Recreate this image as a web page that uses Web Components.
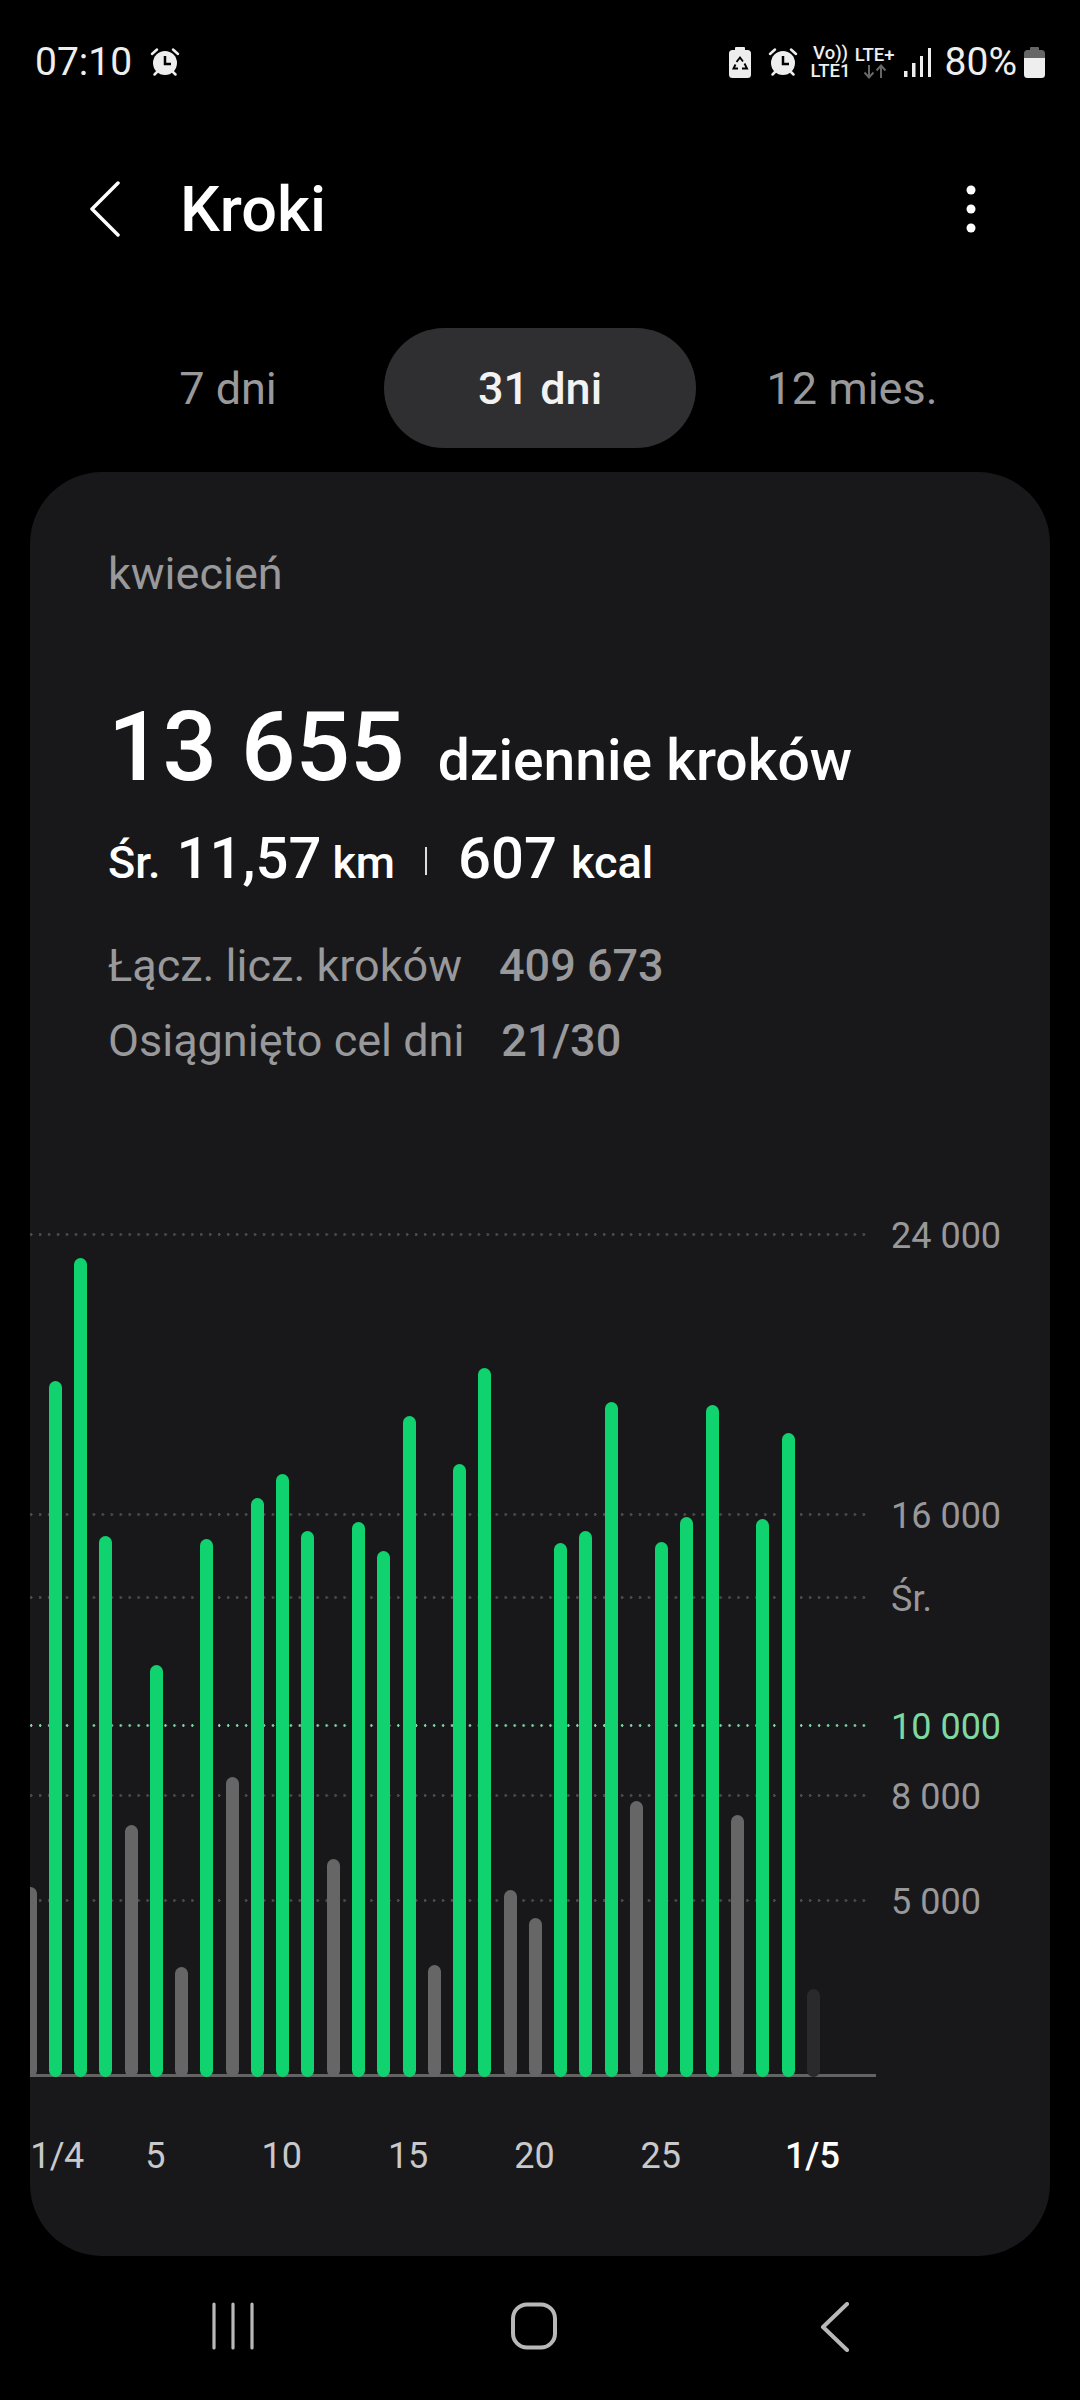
<!DOCTYPE html>
<html lang="pl">
<head>
<meta charset="utf-8">
<title>Kroki</title>
<style>
  html, body { margin: 0; background: #000; }
  body { width: 1080px; height: 2400px; overflow: hidden; font-family: Roboto, "Liberation Sans", sans-serif; color: #fff; }
</style>
</head>
<body>
<status-bar></status-bar>
<app-header>Kroki</app-header>
<period-tabs>
  <period-tab>7 dni</period-tab>
  <period-tab active>31 dni</period-tab>
  <period-tab>12 mies.</period-tab>
</period-tabs>
<steps-card>
  <steps-summary></steps-summary>
  <steps-chart></steps-chart>
</steps-card>
<nav-bar></nav-bar>

<script>
const ALARM = `
  <svg width="30" height="30" viewBox="0 0 30 30">
    <circle cx="15" cy="16" r="12" fill="#eee"/>
    <path d="M2 7 7 2.5M28 7 23 2.5M4.5 27.5 7 25M25.500 27.500 23 25" stroke="#eee" stroke-width="2.500" stroke-linecap="round"/>
    <path d="M15 9v8h6" fill="none" stroke="#000" stroke-width="2.500"/>
  </svg>`;

class StatusBar extends HTMLElement {
  connectedCallback() {
    this.attachShadow({ mode: 'open' });
    this.shadowRoot.innerHTML = `
      <style>
        :host { display: flex; justify-content: space-between; align-items: center; height: 124px; padding: 0 35px 0 35px; color: #eee; font-size: 39px; }
        .side { display: flex; align-items: center; }
        .left { gap: 18px; }
        svg { display: block; }
        .saver { margin-right: 17px; }
        .net { display: flex; flex-direction: column; align-items: center; font-size: 18.500px; font-weight: 500; line-height: 18px; }
        .volte { width: 40px; margin-left: 13px; }
        .lte { width: 42px; margin-left: 3px; }
        .signal { margin: 0 14px 0 8px; }
        .batt { margin-left: 7px; }
      </style>
      <div class="side left"><span>07:10</span>${ALARM}</div>
      <div class="side">
        <svg class="saver" width="22" height="31" viewBox="0 0 22 31">
          <path d="M7 0h8a1 1 0 0 1 1 1v2h2.500A3.500 3.500 0 0 1 22 6.500V27.500A3.500 3.500 0 0 1 18.500 31H3.500A3.500 3.500 0 0 1 0 27.500V6.500A3.500 3.500 0 0 1 3.500 3H6V1a1 1 0 0 1 1-1Z" fill="#eee"/>
          <path d="M7.500 15 11 10.500 14 14.500M15.500 16.500 18 21.500H13M9 21.500H4.500L6.500 17.500" fill="none" stroke="#000" stroke-width="1.900"/>
        </svg>
        ${ALARM}
        <div class="net volte"><span>Vo))</span><span>LTE1</span></div>
        <div class="net lte"><span>LTE+</span>
          <svg width="24" height="15" viewBox="0 0 24 15"><path d="M6 1V13M1.500 8.500 6 13.500 10.500 8.500M18 14V2M13.500 6.500 18 1.500 22.500 6.500" fill="none" stroke="#666" stroke-width="2"/></svg>
        </div>
        <svg class="signal" width="27" height="30" viewBox="0 0 27 30"><path d="M0 24h3.500v6H0ZM8 16h3.500v14H8ZM16 9h3v21h-3ZM24 1h3v29h-3Z" fill="#eee"/></svg>
        <span>80%</span>
        <svg class="batt" width="21" height="31" viewBox="0 0 21 31">
          <path d="M0 11V6.500A3.500 3.500 0 0 1 3.500 3H6V1a1 1 0 0 1 1-1h7a1 1 0 0 1 1 1v2h2.500A3.500 3.500 0 0 1 21 6.500V11Z" fill="#666"/>
          <path d="M0 11H21V27.500A3.500 3.500 0 0 1 17.500 31H3.500A3.500 3.500 0 0 1 0 27.500Z" fill="#eee"/>
        </svg>
      </div>`;
  }
}

class AppHeader extends HTMLElement {
  connectedCallback() {
    this.attachShadow({ mode: 'open' });
    this.shadowRoot.innerHTML = `
      <style>
        :host { display: flex; align-items: center; height: 170px; padding-left: 89px; padding-right: 104px; }
        .title { font-size: 63px; font-weight: 500; margin-left: 59px; flex: 1; }
        svg { display: block; }
      </style>
      <svg width="32" height="56" viewBox="0 0 32 56"><path d="M29 2 3 28 29 54" fill="none" stroke="#fff" stroke-width="3.500" stroke-linecap="round" stroke-linejoin="round"/></svg>
      <div class="title"><slot></slot></div>
      <svg width="10" height="48" viewBox="0 0 10 48"><circle cx="5" cy="5" r="4.500" fill="#fff"/><circle cx="5" cy="24" r="4.500" fill="#fff"/><circle cx="5" cy="43" r="4.500" fill="#fff"/></svg>`;
  }
}

class PeriodTabs extends HTMLElement {
  connectedCallback() {
    this.attachShadow({ mode: 'open' });
    this.shadowRoot.innerHTML = `
      <style>
        :host { display: grid; grid-template-columns: repeat(3, 1fr); padding: 0 72px; margin: 34px 0 24px; }
      </style>
      <slot></slot>`;
  }
}

class PeriodTab extends HTMLElement {
  connectedCallback() {
    this.attachShadow({ mode: 'open' });
    this.shadowRoot.innerHTML = `
      <style>
        :host { display: flex; align-items: center; justify-content: center; height: 120px; border-radius: 60px; font-size: 45px; color: #99999b; }
        :host([active]) { background: #2f2f31; color: #f2f2f2; font-weight: 500; }
      </style>
      <slot></slot>`;
  }
}

class StepsCard extends HTMLElement {
  connectedCallback() {
    this.attachShadow({ mode: 'open' });
    this.shadowRoot.innerHTML = `
      <style>
        :host { display: flex; flex-direction: column; justify-content: space-between; width: 1020px; height: 1784px; margin-left: 30px; background: #18181a; border-radius: 72px; overflow: hidden; }
      </style>
      <slot></slot>`;
  }
}

class StepsSummary extends HTMLElement {
  connectedCallback() {
    this.attachShadow({ mode: 'open' });
    this.shadowRoot.innerHTML = `
      <style>
        :host { display: block; padding: 77px 0 0 78px; }
        .month { font-size: 45px; line-height: 50px; color: #99999b; }
        .big { display: flex; align-items: baseline; gap: 33px; margin-top: 93px; line-height: 110px; }
        .big b { font-size: 96px; font-weight: 500; }
        .big span { font-size: 57px; font-weight: 500; }
        .avg { display: flex; align-items: baseline; margin-top: 7px; line-height: 70px; font-size: 45px; font-weight: 500; }
        .avg b { font-size: 58px; font-weight: 500; }
        .dist { margin: 0 11px 0 16px; }
        .kcal { margin: 0 14px 0 0; }
        .avg i { align-self: center; width: 2px; height: 28px; margin: 0 31px 0 30px; background: #ddd; }
        .stat { display: flex; gap: 37px; font-size: 45px; line-height: 75px; color: #99999b; }
        .first { margin-top: 30px; }
        .stat b { font-weight: 500; }
      </style>
      <div class="month">kwiecień</div>
      <div class="big"><b>13 655</b><span>dziennie kroków</span></div>
      <div class="avg"><span>Śr.</span><b class="dist">11,57</b><span>km</span><i></i><b class="kcal">607</b><span>kcal</span></div>
      <div class="stat first"><span>Łącz. licz. kroków</span><b>409 673</b></div>
      <div class="stat"><span>Osiągnięto cel dni</span><b>21/30</b></div>`;
  }
}

// page y of each bar's top, first bar is clipped by the card edge
const BARS = [
  [1887, 'g'], [1381, 'o'], [1258, 'o'], [1536, 'o'], [1825, 'g'], [1665, 'o'], [1967, 'g'], [1539, 'o'],
  [1777, 'g'], [1498, 'o'], [1474, 'o'], [1531, 'o'], [1859, 'g'], [1522, 'o'], [1551, 'o'], [1416, 'o'],
  [1965, 'g'], [1464, 'o'], [1368, 'o'], [1890, 'g'], [1918, 'g'], [1543, 'o'], [1531, 'o'], [1402, 'o'],
  [1801, 'g'], [1542, 'o'], [1517, 'o'], [1405, 'o'], [1815, 'g'], [1519, 'o'], [1433, 'o'], [1989, 'd'],
];
const CHART_TOP = 1200;
const BASE_Y = 2077;
const LINES = [
  [1234, '24 000'], [1514, '16 000'], [1597, 'Śr.'], [1725, '10 000', 'goal'], [1795, '8 000'], [1900, '5 000'],
];
const TICKS = [[1, '1/4', 'first'], [5, '5'], [10, '10'], [15, '15'], [20, '20'], [25, '25'], [31, '1/5', 'now']];

class StepsChart extends HTMLElement {
  connectedCallback() {
    this.attachShadow({ mode: 'open' });
    const bars = BARS.map(([top, kind]) => `<div class="bar ${kind}" style="height:${BASE_Y - top}px"></div>`).join('');
    const lines = LINES.map(([y, label, cls = '']) => {
      const t = y - CHART_TOP;
      return `<div class="line ${cls}" style="top:${t}px"></div><div class="label ${cls}" style="top:${t + 2}px">${label}</div>`;
    }).join('');
    const ticks = TICKS.map(([i, label, cls = '']) => `<span class="${cls}" style="grid-column:${i + 1}">${label}</span>`).join('');
    this.shadowRoot.innerHTML = `
      <style>
        :host { display: block; height: 1056px; }
        .plot { position: relative; height: 877px; }
        .bars, .ticks { display: grid; grid-template-columns: repeat(32, 25.27px); }
        .bars { position: relative; height: 877px; margin-left: -12.6px; align-items: end; justify-items: center; }
        .bar { width: 13px; border-radius: 6.500px; }
        .o { background: #10d26f; }
        .g { background: #666667; }
        .d { background: #2a2a2c; }
        .line { position: absolute; left: 0; width: 838px; height: 3px; margin-top: -1.500px; background: radial-gradient(circle at 1.250px 1.500px, #4a4a4c 1.200px, transparent 1.500px) 0 0 / 8.960px 3px repeat-x; }
        .line.goal { background-image: radial-gradient(circle at 1.250px 1.500px, #86d9aa 1.100px, transparent 1.400px); }
        .label { position: absolute; left: 861px; transform: translateY(-50%); font-size: 36px; line-height: 44px; color: #98989a; white-space: nowrap; }
        .label.goal { color: #7ed9a0; }
        .axis { position: absolute; left: 0; bottom: 0; width: 846px; height: 3px; background: #636364; }
        .ticks { height: 179px; margin-left: -13.500px; align-items: start; justify-items: center; padding-top: 57px; box-sizing: border-box; font-size: 36px; line-height: 44px; color: #c9c9cb; }
        .ticks span { grid-row: 1; white-space: nowrap; }
        .ticks .first { margin-left: 5px; letter-spacing: -0.6px; }
        .ticks .now { color: #fff; font-weight: 500; }
      </style>
      <div class="plot">
        ${lines}
        <div class="axis"></div>
        <div class="bars">${bars}</div>
      </div>
      <div class="ticks">${ticks}</div>`;
  }
}

class NavBar extends HTMLElement {
  connectedCallback() {
    this.attachShadow({ mode: 'open' });
    this.shadowRoot.innerHTML = `
      <style>
        :host { display: flex; height: 144px; padding: 46px 0 0 212px; box-sizing: border-box; }
        svg { display: block; }
        .home { margin-left: 256px; }
        .back { margin-left: 262px; }
      </style>
      <svg width="42" height="48" viewBox="0 0 42 48"><path d="M2 2V46M21 2V46M40 2V46" stroke="#b8b8b8" stroke-width="3.200" stroke-linecap="round"/></svg>
      <svg class="home" width="48" height="48" viewBox="0 0 48 48"><rect x="3" y="2.500" width="42" height="43" rx="14" fill="none" stroke="#b8b8b8" stroke-width="4"/></svg>
      <svg class="back" width="30" height="50" viewBox="0 0 30 50"><path d="M27 2 3 25 27 48" fill="none" stroke="#b8b8b8" stroke-width="4" stroke-linecap="round" stroke-linejoin="round"/></svg>`;
  }
}

customElements.define('status-bar', StatusBar);
customElements.define('app-header', AppHeader);
customElements.define('period-tabs', PeriodTabs);
customElements.define('period-tab', PeriodTab);
customElements.define('steps-card', StepsCard);
customElements.define('steps-summary', StepsSummary);
customElements.define('steps-chart', StepsChart);
customElements.define('nav-bar', NavBar);
</script>
</body>
</html>
